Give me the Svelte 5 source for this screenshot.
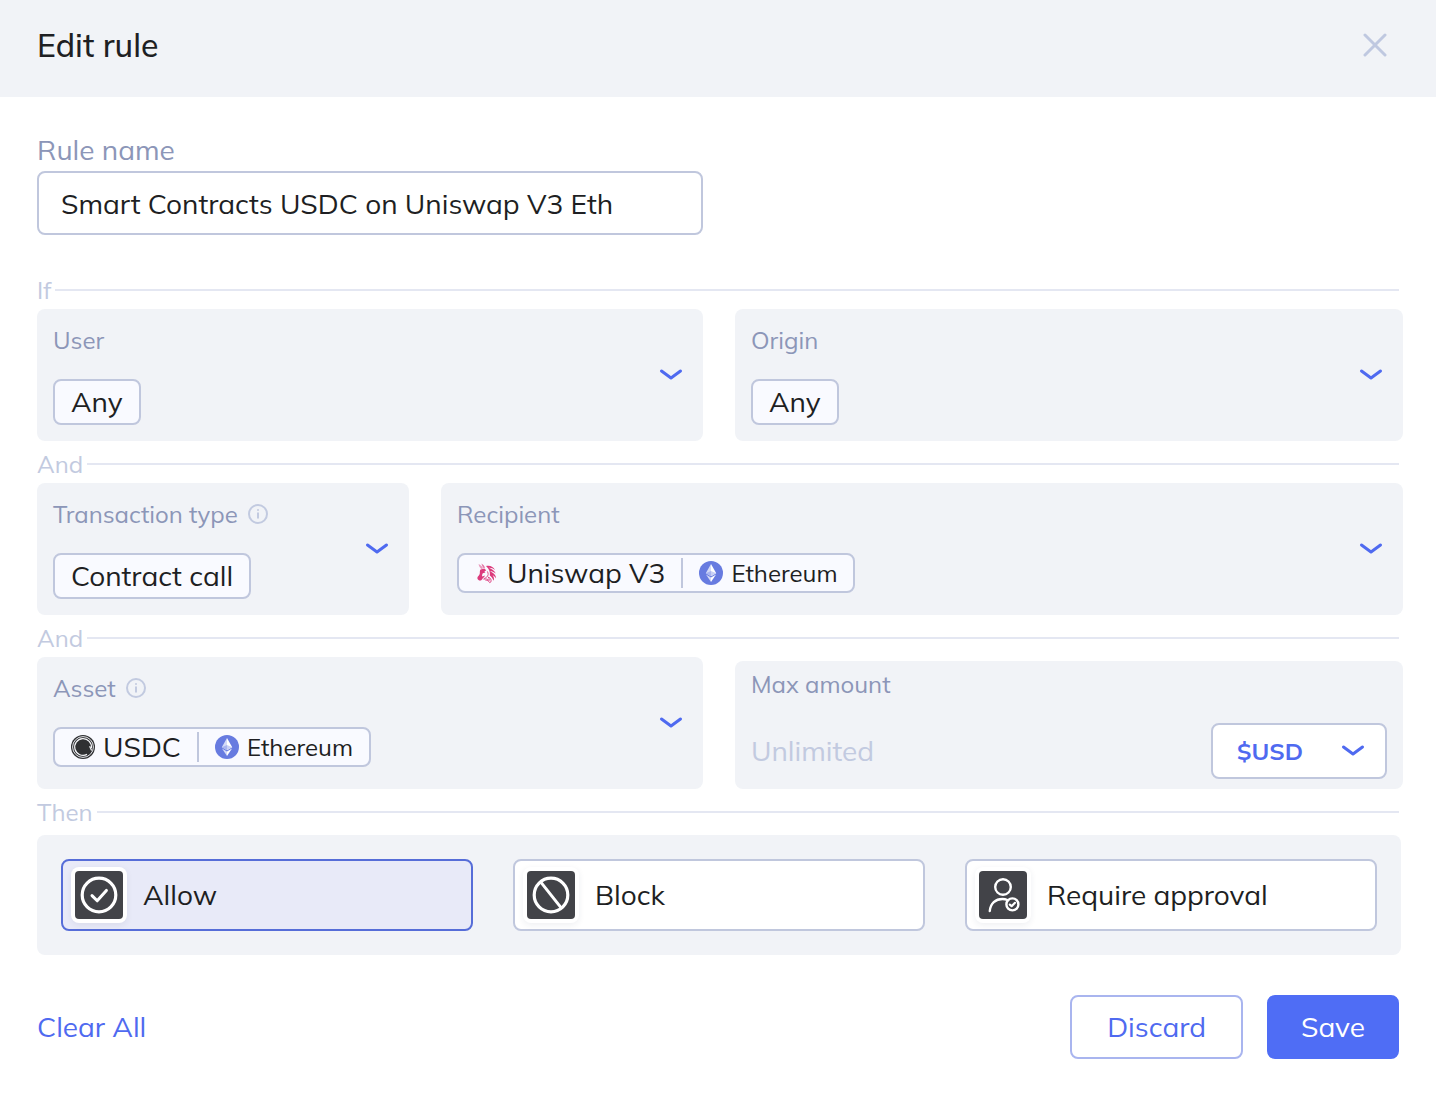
<script>
  let ruleName = 'Smart Contracts USDC on Uniswap V3 Eth';
  let amount = '';
  let currency = '$USD';
  let action = 'allow';

  const actions = [
    { id: 'allow', label: 'Allow' },
    { id: 'block', label: 'Block' },
    { id: 'approval', label: 'Require approval' }
  ];

  const rows = [
    {
      title: 'If',
      layout: 'even',
      fields: [
        { label: 'User', value: 'Any' },
        { label: 'Origin', value: 'Any' }
      ]
    },
    {
      title: 'And',
      layout: 'narrow-wide',
      fields: [
        { label: 'Transaction type', info: true, value: 'Contract call' },
        { label: 'Recipient', value: 'Uniswap V3', icon: 'uniswap', network: 'Ethereum' }
      ]
    },
    {
      title: 'And',
      layout: 'even',
      fields: [
        { label: 'Asset', info: true, value: 'USDC', icon: 'usdc', network: 'Ethereum' }
      ],
      amount: true
    }
  ];

  function clearAll() {
    ruleName = '';
    amount = '';
    action = '';
  }
</script>

<form class="dialog" on:submit|preventDefault>
  <header class="header">
    <h1>Edit rule</h1>
    <button type="button" class="close" aria-label="Close">
      <svg width="24" height="24" viewBox="0 0 24 24">
        <path d="M2 2 22 22M22 2 2 22" />
      </svg>
    </button>
  </header>

  <div class="body">
    <div class="name">
      <label for="rule-name">Rule name</label>
      <input id="rule-name" type="text" bind:value={ruleName} />
    </div>

    {#each rows as row}
      <div class="divider">{row.title}</div>
      <div class="row {row.layout}">
        {#each row.fields as field}
          <button type="button" class="field" aria-haspopup="listbox">
            <span class="field-main">
              <span class="field-label">
                {field.label}
                {#if field.info}
                  <svg class="info" width="20" height="20" viewBox="0 0 20 20">
                    <circle cx="10" cy="10" r="9" />
                    <path d="M10 8.4V14.6M10 5.2V6.8" />
                  </svg>
                {/if}
              </span>
              {#if field.network}
                <span class="chip split">
                  <span class="part">
                    {#if field.icon === 'uniswap'}
                      <svg width="24" height="24" viewBox="0 0 24 24">
                        <g fill="#dc3a7c">
                          <path d="M3.6 3C5.4 4 7 5.4 8 7L6.8 8.2C5 7 3.8 5.2 3.6 3Z" opacity=".5" />
                          <path d="M6.6 2.4C8.2 3.6 9.4 4.8 10 6.6L8.8 7.2C7.6 5.8 6.8 4.4 6.6 2.4Z" opacity=".7" />
                          <!-- mane -->
                          <path d="M11 5C15 4 18.6 5.8 20 9C17.8 7.2 16 6.6 13.8 6.8C16.8 8 19.4 9.6 20.8 12.6C18.6 11 17 10.2 15 10C18 11.8 21.2 14 21 17.4C20 15.8 19 14.8 17.6 14.2C19 16 19.4 17.8 18.6 19.8C17.8 17.4 16.4 15.8 14.8 14.4C15.4 11 14.2 7.8 11 5Z" />
                          <!-- face -->
                          <path d="M5.6 8.6 9.4 7.4C10.2 8 10.8 8.6 11.2 9.4L9.4 10.2 10.4 11.4 7.8 12.2C7 13.4 7 14.6 7.2 15.4L10.2 14.4C9.2 16 8.4 16.6 7.6 17.4C7 18.8 5.8 20 4.2 19.4C2.6 18.8 2 17.4 2.6 16C3.2 14.8 4.6 14 4.8 12.4C5 10.8 4.6 9.8 5.6 8.6Z" />
                          <!-- neck -->
                          <path d="M12.4 10.4C13.6 12.6 13.4 14.8 11.6 16.2C10.4 17.2 9 17.2 8.6 18.2C10.6 17.6 13 18 14.2 19.6C14.6 17.8 14 16.8 13 16.2C15.2 16.4 16.6 18.2 16 20.8L14.6 21.6C13.8 20 12.4 19 10.4 19.2" fill="none" stroke="#dc3a7c" stroke-width=".9" />
                        </g>
                      </svg>
                    {:else}
                      <svg width="24" height="24" viewBox="0 0 24 24">
                        <circle cx="12" cy="12" r="12" fill="#2f3032" />
                        <circle cx="12" cy="12" r="10.4" fill="none" stroke="#e4e5ea" stroke-width="1" />
                        <path
                          d="M20.4 13.2A8.4 8.4 0 1 0 16 19.4"
                          fill="none"
                          stroke="#f4f5f8"
                          stroke-width="1.2"
                        />
                        <path d="M18.6 11.2 20.6 15.6" stroke="#f4f5f8" stroke-width="1.2" />
                      </svg>
                    {/if}
                    {field.value}
                  </span>
                  <span class="part network">
                    <svg width="24" height="24" viewBox="0 0 24 24">
                      <circle cx="12" cy="12" r="12" fill="#677be0" />
                      <path d="M12 3 6.8 12.2 12 15.2Z" fill="#d5dbf7" />
                      <path d="M12 3 17.2 12.2 12 15.2Z" fill="#fff" />
                      <path d="M6.8 12.2 12 10V15.2Z" fill="#a9b5ef" />
                      <path d="M17.2 12.2 12 10V15.2Z" fill="#c8d0f5" />
                      <path d="M7 13.6 12 16.6V21Z" fill="#d5dbf7" />
                      <path d="M17 13.6 12 16.6V21Z" fill="#fff" />
                    </svg>
                    {field.network}
                  </span>
                </span>
              {:else}
                <span class="chip">{field.value}</span>
              {/if}
            </span>
            <svg class="chevron" width="24" height="14" viewBox="0 0 24 14">
              <path d="M2.5 3 12 10 21.5 3" />
            </svg>
          </button>
        {/each}

        {#if row.amount}
          <div class="amount">
            <label for="max-amount">Max amount</label>
            <div class="amount-line">
              <input id="max-amount" type="text" placeholder="Unlimited" bind:value={amount} />
              <div class="currency">
                <select aria-label="Currency" bind:value={currency}>
                  <option>$USD</option>
                </select>
                <svg class="chevron" width="24" height="14" viewBox="0 0 24 14">
                  <path d="M2.5 3 12 10 21.5 3" />
                </svg>
              </div>
            </div>
          </div>
        {/if}
      </div>
    {/each}

    <div class="divider">Then</div>
    <div class="actions">
      {#each actions as item}
        <label class="action" class:selected={action === item.id}>
          <input type="radio" name="action" value={item.id} bind:group={action} />
          <span class="action-icon">
            <svg width="48" height="48" viewBox="0 0 48 48">
              {#if item.id === 'allow'}
                <circle cx="24" cy="24" r="16.8" stroke-width="3.2" />
                <path d="M17 24.6 22.2 29.8 31.4 19.4" stroke-width="3" />
              {:else if item.id === 'block'}
                <circle cx="24" cy="24" r="16.8" stroke-width="3.2" />
                <path d="M14 11.4 34 36.6" stroke-width="3" />
              {:else}
                <circle cx="24" cy="16" r="7.8" stroke-width="2.4" />
                <path d="M10.8 40C11.4 32.4 16.6 28 23.4 28C25.4 28 27 28.4 28.4 29" stroke-width="2.4" />
                <circle cx="33.4" cy="33.4" r="6" stroke-width="2.4" />
                <path d="M30.8 33.6 32.6 35.2 36 31.8" stroke-width="2.2" />
              {/if}
            </svg>
          </span>
          {item.label}
        </label>
      {/each}
    </div>

    <footer class="footer">
      <button type="button" class="clear" on:click={clearAll}>Clear All</button>
      <button type="button" class="btn discard">Discard</button>
      <button type="submit" class="btn save">Save</button>
    </footer>
  </div>
</form>

<style>
  :global(body) {
    background: #fff;
  }

  .dialog, .dialog button, .dialog input, .dialog select {
    font-family: Mulish, Muli, Lato, sans-serif;
    font-size: 28px;
    line-height: 36px;
    color: #1e1f23;
    box-sizing: border-box;
  }

  button {
    border: none;
    background: none;
    padding: 0;
    cursor: pointer;
  }

  svg {
    display: block;
    flex: none;
  }

  .header {
    display: flex;
    align-items: center;
    justify-content: space-between;
    height: 97px;
    padding: 0 49px 8px 37px;
    background: #f1f3f7;
    box-sizing: border-box;
  }

  h1 {
    margin: 0;
    font-size: 32px;
    line-height: 40px;
    font-weight: 500;
  }

  .close path {
    stroke: #bfc8e0;
    stroke-width: 3;
    stroke-linecap: round;
  }

  .body {
    padding: 35px 33px 36px 37px;
  }

  .name {
    display: flex;
    flex-direction: column;
    gap: 3px;
    width: calc(50% - 17px);
    margin-bottom: 36px;
  }

  .name label {
    color: #8c96b8;
  }

  .name input {
    height: 64px;
    padding: 0 22px;
    border: 2px solid #c0c7dd;
    border-radius: 8px;
    background: #fff;
  }

  .divider {
    display: flex;
    align-items: center;
    gap: 4px;
    height: 38px;
    margin: 0 4px 0 0;
    font-size: 24px;
    line-height: 32px;
    color: #c2cae0;
  }

  .divider::after {
    content: '';
    flex: 1;
    height: 2px;
    background: #e4e7f2;
  }

  .row {
    display: grid;
    gap: 32px;
    margin-bottom: 4px;
  }

  .even {
    grid-template-columns: 666fr 668fr;
  }

  .narrow-wide {
    grid-template-columns: 372fr 962fr;
  }

  .field {
    display: flex;
    align-items: center;
    justify-content: space-between;
    min-height: 132px;
    padding: 15px 20px 16px 16px;
    border-radius: 8px;
    background: #f1f3f7;
    text-align: left;
  }

  .field-main {
    display: flex;
    flex-direction: column;
    align-items: flex-start;
    align-self: flex-start;
    gap: 23px;
  }

  .field-label {
    display: flex;
    align-items: center;
    gap: 10px;
    font-size: 24px;
    line-height: 32px;
    color: #8c96b8;
  }

  .info {
    fill: none;
    stroke: #c2cae0;
    stroke-width: 2;
  }

  .chip {
    display: flex;
    align-items: center;
    height: 46px;
    padding: 0 16px;
    border: 2px solid #c0c7dd;
    border-radius: 8px;
    background: #f9faff;
    box-sizing: border-box;
  }

  .split {
    height: 40px;
  }

  .part {
    display: flex;
    align-items: center;
    gap: 8px;
  }

  .network {
    height: 30px;
    margin-left: 16px;
    padding-left: 16px;
    border-left: 2px solid #c0c7dd;
    font-size: 24px;
  }

  .chevron {
    fill: none;
    stroke: #4f6af0;
    stroke-width: 3;
    stroke-linecap: round;
    stroke-linejoin: round;
  }

  .amount {
    display: flex;
    flex-direction: column;
    justify-content: space-between;
    margin-top: 4px;
    padding: 7px 16px 10px;
    border-radius: 8px;
    background: #f1f3f7;
  }

  .amount label {
    font-size: 24px;
    line-height: 32px;
    color: #8c96b8;
  }

  .amount-line {
    display: flex;
    align-items: center;
    gap: 16px;
  }

  .amount input {
    flex: 1;
    min-width: 0;
    padding: 0;
    border: none;
    background: none;
  }

  .amount input::placeholder {
    color: #c2cae0;
    opacity: 1;
  }

  .currency {
    display: grid;
    align-items: center;
    width: 176px;
  }

  .currency select, .currency .chevron {
    grid-area: 1 / 1;
  }

  .currency select {
    height: 56px;
    padding: 0 24px;
    border: 2px solid #c0c7dd;
    border-radius: 8px;
    background: #fff;
    appearance: none;
    font-size: 24px;
    font-weight: 700;
    color: #4f6af0;
  }

  .currency .chevron {
    justify-self: end;
    margin-right: 22px;
    pointer-events: none;
  }

  .actions {
    display: grid;
    grid-template-columns: repeat(3, 1fr);
    gap: 40px;
    margin: 4px 2px 0 0;
    padding: 24px;
    border-radius: 8px;
    background: #f1f3f7;
  }

  .action {
    display: flex;
    align-items: center;
    gap: 16px;
    height: 72px;
    padding: 0 8px;
    border: 2px solid #c0c7dd;
    border-radius: 8px;
    background: #fff;
    box-sizing: border-box;
    cursor: pointer;
  }

  .action.selected {
    border-color: #566dd8;
    background: #e8eaf8;
  }

  .action input {
    position: absolute;
    opacity: 0;
    pointer-events: none;
  }

  .action-icon {
    padding: 4px;
    border-radius: 8px;
    background: #fff;
    box-shadow: 0 2px 6px rgba(40, 50, 90, 0.08);
  }

  .action-icon svg {
    border-radius: 4px;
    background: #424348;
    fill: none;
    stroke: #fff;
    stroke-linecap: round;
    stroke-linejoin: round;
  }

  .footer {
    display: flex;
    align-items: center;
    gap: 24px;
    margin: 40px 4px 0 0;
  }

  .footer .clear {
    margin-right: auto;
    color: #4f6af0;
  }

  .footer .btn {
    height: 64px;
    padding: 0 32px;
    border: 2px solid #a9b5ef;
    border-radius: 8px;
  }

  .footer .discard {
    padding: 0 35px;
    color: #4f6af0;
  }

  .footer .save {
    border-color: #4f6df5;
    background: #4f6df5;
    color: #fff;
  }
</style>
